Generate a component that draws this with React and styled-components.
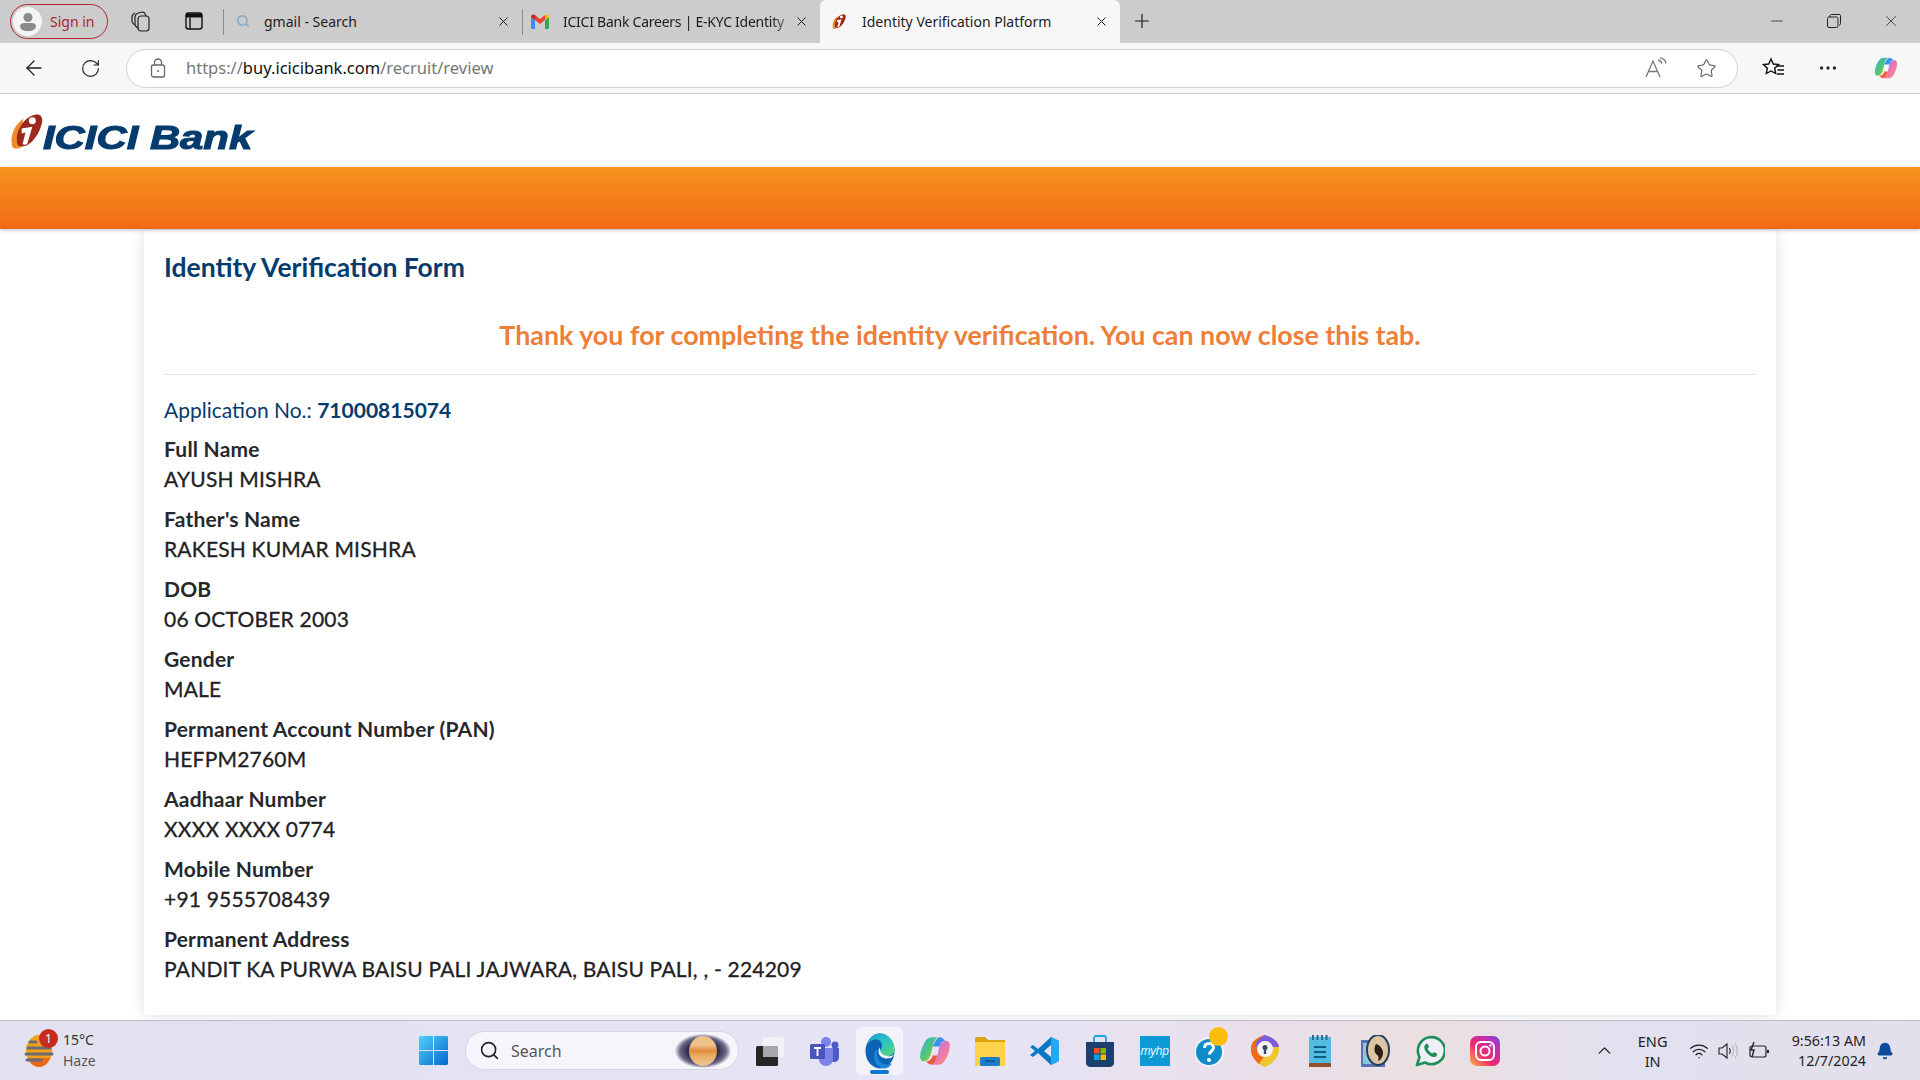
import React from "react";
import styled, { createGlobalStyle } from "styled-components";
import { X, Plus, ArrowLeft, RotateCw, Star, Search, Minus, ChevronUp, Wifi, MoreHorizontal, Bell } from "lucide-react";

const GlobalStyle = createGlobalStyle`
  html, body { margin: 0; padding: 0; background: #fff; }
  body { width: 1920px; height: 1080px; overflow: hidden; }
`;

const Screen = styled.div`
  width: 1920px;
  height: 1080px;
  display: flex;
  flex-direction: column;
  font-family: "Noto Sans", sans-serif;
  color: #1c1c1c;
`;

/* Browser tabs */
const TabStrip = styled.div`
  height: 43px;
  flex: none;
  background: #cccccc;
  display: flex;
  align-items: flex-start;
  box-sizing: border-box;
  padding-left: 10px;
`;

const SignIn = styled.div`
  width: 98px;
  height: 35px;
  margin-top: 4px;
  box-sizing: border-box;
  border: 1.5px solid #b3262e;
  border-radius: 18px;
  display: flex;
  align-items: center;
  gap: 8px;
  padding-left: 2px;
  font-size: 14px;
  color: #a8262c;
  flex: none;
`;

const AvatarDot = styled.div`
  width: 29px;
  height: 29px;
  border-radius: 50%;
  background: #f4f4f4;
  display: flex;
  align-items: center;
  justify-content: center;
`;

const StripIcon = styled.div`
  width: 24px;
  height: 42px;
  display: flex;
  align-items: center;
  justify-content: center;
  margin-left: ${(p) => p.$ml}px;
  flex: none;
  color: #1a1a1a;
`;

const TabSep = styled.div`
  width: 1px;
  height: 26px;
  margin: 9px 0 0 ${(p) => p.$ml || 0}px;
  background: #8c8c8c;
  flex: none;
`;

const Tab = styled.div`
  width: ${(p) => p.$w}px;
  height: ${(p) => (p.$active ? 43 : 42)}px;
  flex: none;
  box-sizing: border-box;
  display: flex;
  align-items: center;
  padding: 0 11px 0 ${(p) => p.$pl}px;
  font-size: 14px;
  background: ${(p) => (p.$active ? "#f7f7f7" : "transparent")};
  border-radius: ${(p) => (p.$active ? "6px 6px 0 0" : "0")};
`;

const TabIcon = styled.div`
  width: 18px;
  height: 18px;
  flex: none;
  display: flex;
  align-items: center;
  justify-content: center;
  margin-right: ${(p) => p.$mr}px;
`;

const TabTitle = styled.span`
  flex: 1;
  white-space: nowrap;
  ${(p) =>
    p.$fade &&
    `letter-spacing: -0.25px;
     -webkit-mask-image: linear-gradient(to right, #000 90%, rgba(0,0,0,0.25));
     mask-image: linear-gradient(to right, #000 90%, rgba(0,0,0,0.25));`}
`;

const WindowControls = styled.div`
  margin-left: auto;
  display: flex;
  align-items: center;
  height: 42px;
  gap: 41px;
  padding-right: 20px;
`;

/* Address bar row */
const Toolbar = styled.div`
  height: 51px;
  flex: none;
  box-sizing: border-box;
  background: #f7f7f7;
  border-bottom: 1px solid #c9c9c9;
  display: flex;
  align-items: center;
  padding-left: 22px;
`;

const ToolButton = styled.div`
  width: 24px;
  height: 24px;
  flex: none;
  display: flex;
  align-items: center;
  justify-content: center;
  margin-left: ${(p) => p.$ml || 0}px;
  color: #222;
`;

const AddressBar = styled.div`
  width: 1612px;
  height: 39px;
  margin-left: 24px;
  flex: none;
  box-sizing: border-box;
  background: #fff;
  border: 1px solid #d2d2d2;
  border-radius: 20px;
  display: flex;
  align-items: center;
  padding: 0 20px 0 23px;
  color: #666;
`;

const Url = styled.div`
  margin: -2px 0 0 20px;
  font-size: 16.5px;
  color: #777;
  flex: 1;
  b {
    font-weight: 400;
    color: #111;
  }
`;

/* Page */
const Page = styled.div`
  flex: 1;
  min-height: 0;
  display: flex;
  flex-direction: column;
  background: #fff;
`;

const LogoRow = styled.div`
  height: 73px;
  flex: none;
  box-sizing: border-box;
  padding: 20px 0 0 10px;
  display: flex;
  align-items: flex-start;
`;

const LogoText = styled.span`
  font-family: "Liberation Sans", sans-serif;
  font-weight: 700;
  font-style: italic;
  font-size: 34px;
  line-height: 40px;
  margin-top: 3px;
  color: #053c6d;
  -webkit-text-stroke: 1.1px #053c6d;
  white-space: nowrap;
  transform: scaleX(1.23);
  transform-origin: left center;
`;

const OrangeBar = styled.div`
  height: 62px;
  flex: none;
  background: linear-gradient(#f7941f, #f26a15);
  box-shadow: 0 1px 4px rgba(0, 0, 0, 0.25);
  position: relative;
  z-index: 1;
`;

const Card = styled.main`
  width: 1632px;
  margin: 1px auto 0;
  height: 785px;
  flex: none;
  box-sizing: border-box;
  padding: 18px 20px 0;
  background: #fff;
  box-shadow: 0 0 14px rgba(0, 0, 0, 0.14);
  border-radius: 0 0 4px 4px;
  font-family: Lato, sans-serif;
`;

const FormTitle = styled.h1`
  margin: 0;
  font-size: 26.5px;
  line-height: 38px;
  font-weight: 700;
  color: #053c6d;
`;

const ThankYou = styled.div`
  margin-top: 31px;
  height: 58px;
  box-sizing: border-box;
  line-height: 36px;
  text-align: center;
  font-size: 26.8px;
  font-weight: 700;
  color: #ee7f3a;
  border-bottom: 1px solid #e4e4e4;
`;

const AppNo = styled.div`
  margin-top: 22px;
  font-size: 21px;
  line-height: 26px;
  color: #053c6d;
  b {
    font-weight: 700;
  }
`;

const Fields = styled.dl`
  margin: 11px 0 0;
  display: flex;
  flex-direction: column;
  gap: 10px;
`;

const Field = styled.div`
  height: 60px;
`;

const FieldLabel = styled.dt`
  font-size: 21px;
  line-height: 30px;
  font-weight: 700;
  letter-spacing: 0.2px;
  color: #26282b;
`;

const FieldValue = styled.dd`
  margin: 0;
  font-size: 21px;
  line-height: 30px;
  letter-spacing: 0.2px;
  -webkit-text-stroke: 0.3px #1f2124;
  color: #1f2124;
`;

/* Windows taskbar */
const Taskbar = styled.footer`
  height: 60px;
  flex: none;
  box-sizing: border-box;
  border-top: 1px solid #bcbbca;
  background: linear-gradient(90deg, #e1e1ef 0%, #e6e4f6 50%, #e9dfe8 68%, #ecdfe0 74%, #e2e1ef 84%, #e3dfec 100%);
  display: flex;
  align-items: center;
  position: relative;
  margin-top: 5px;
`;

const Weather = styled.div`
  width: 114px;
  padding-left: 24px;
  display: flex;
  align-items: center;
  gap: 9px;
  flex: none;
  position: relative;
`;

const WeatherBadge = styled.span`
  position: absolute;
  left: 39px;
  top: -2px;
  width: 19px;
  height: 19px;
  border-radius: 50%;
  background: #c62b20;
  color: #fff;
  font-size: 12px;
  line-height: 19px;
  text-align: center;
`;

const WeatherText = styled.div`
  font-size: 14px;
  line-height: 21px;
  margin-top: -2px;
  color: #333;
  span {
    display: block;
    color: #555;
  }
`;

const Center = styled.div`
  margin-left: 281px;
  display: flex;
  align-items: center;
  flex: none;
`;

const TaskSearch = styled.div`
  width: 274px;
  height: 39px;
  margin-left: 17px;
  box-sizing: border-box;
  border-radius: 20px;
  background: #f6f5fc;
  border: 1px solid #d6d5e4;
  display: flex;
  align-items: center;
  padding: 0 7px 0 13px;
  gap: 11px;
  font-size: 16px;
  color: #555;
`;

const Planet = styled.div`
  margin-left: auto;
  width: 56px;
  height: 34px;
  border-radius: 50%;
  display: flex;
  align-items: center;
  justify-content: center;
  background: radial-gradient(ellipse at center, #2f2a4e 38%, #6b6885 58%, rgba(240, 240, 250, 0) 72%);
`;

const PlanetBall = styled.div`
  width: 28px;
  height: 30px;
  border-radius: 50%;
  background: linear-gradient(#eec28a 0 30%, #e48a3c 50%, #e9ab62 64%, #edc896);
`;

const Apps = styled.div`
  display: flex;
  align-items: center;
  margin-left: 3px;
`;

const AppSlot = styled.div`
  width: 55px;
  height: 56px;
  display: flex;
  align-items: center;
  justify-content: center;
  position: relative;
  flex: none;
`;

const ActiveBg = styled.div`
  width: 47px;
  height: 48px;
  border-radius: 5px;
  background: #f3f2fb;
  display: flex;
  align-items: center;
  justify-content: center;
  position: relative;
`;

const ActiveMark = styled.span`
  position: absolute;
  left: 14px;
  bottom: 1px;
  width: 19px;
  height: 4px;
  border-radius: 2px;
  background: #0b78d0;
`;

const HelpDot = styled.span`
  position: absolute;
  right: 9px;
  top: 4px;
  width: 19px;
  height: 19px;
  border-radius: 50%;
  background: #fbbc0a;
`;

const Tray = styled.div`
  margin-left: auto;
  display: flex;
  align-items: center;
  padding-right: 26px;
  color: #222;
`;

const Lang = styled.div`
  width: 40px;
  margin-left: 18px;
  font-size: 14.5px;
  line-height: 20px;
  text-align: center;
`;

const TrayIcons = styled.div`
  display: flex;
  align-items: center;
  gap: 9px;
  margin-left: 16px;
`;

const Clock = styled.div`
  margin-left: 22px;
  font-size: 14.3px;
  line-height: 20px;
  text-align: right;
  white-space: nowrap;
`;

const IciciMark = ({ size = 34 }) => (
  <svg width={size} height={size * 1.06} viewBox="0 0 34 36">
    <path d="M3 35C-1 26 3 12 14 5c-3 9-4 20-2 29-3 2-6 2-9 1z" fill="#f08a2a" />
    <path d="M8 32C4 22 12 4 25 1c7-2 9 3 8 8-2 9-8 19-15 23-4 2-8 2-10 0z" fill="#9b2a1c" />
    <circle cx="23" cy="7" r="3.6" fill="#fff" />
    <path d="M12 15l11-2-5 17c-1 2-4 2-5 1l3-12-4 1z" fill="#fff" />
  </svg>
);

const CopilotIcon = ({ size = 30 }) => (
  <svg width={size} height={size} viewBox="0 0 28 28">
    <defs>
      <linearGradient id={`cpa${size}`} x1="0" y1="0" x2="1" y2="1">
        <stop offset="0" stopColor="#2fb4f0" />
        <stop offset="0.55" stopColor="#56c76a" />
        <stop offset="1" stopColor="#f2c230" />
      </linearGradient>
      <linearGradient id={`cpb${size}`} x1="0" y1="0" x2="1" y2="1">
        <stop offset="0" stopColor="#9f72ec" />
        <stop offset="0.6" stopColor="#f07aa8" />
        <stop offset="1" stopColor="#f59a5a" />
      </linearGradient>
    </defs>
    <path d="M11 2h6c-3 1-4 4-5 8l-2 8c-1 3-3 5-6 5-2 0-3-2-3-4 0-3 1-7 3-11 2-4 4-6 7-6z" fill={`url(#cpa${size})`} />
    <path d="M17 26h-6c3-1 4-4 5-8l2-8c1-3 3-5 6-5 2 0 3 2 3 4 0 3-1 7-3 11-2 4-4 6-7 6z" fill={`url(#cpb${size})`} />
    <path d="M12 10c2-4 3-7 6-8 2 0 4 2 5 3-3 0-4 2-5 5z" fill="#3a8ff0" />
    <path d="M16 18c-1 4-2 7-5 8-2 0-4-2-5-3 3 0 5-1 6-5z" fill="#ef5a3c" />
  </svg>
);

const PersonIcon = () => (
  <svg width="20" height="20" viewBox="0 0 20 20" fill="#8a8a8a">
    <circle cx="10" cy="5.5" r="4.5" />
    <path d="M2 14c0-2 2-3 4-3h8c2 0 4 1 4 3 0 3-3 5-8 5s-8-2-8-5z" />
  </svg>
);

const CollectionsIcon = () => (
  <svg width="22" height="22" viewBox="0 0 22 22" fill="none" stroke="#222" strokeWidth="1.2">
    <rect x="8" y="6" width="11" height="15" rx="3" />
    <path d="M8 18c-2-1-3-2-3-4V7c0-2 1-3 3-4l5-1c1 0 2 1 3 4" />
    <path d="M4.5 15C3 14 2 13 2 11V7c0-2 1-3 3-4" />
  </svg>
);

const VerticalTabsIcon = () => (
  <svg width="20" height="20" viewBox="0 0 20 20" fill="none" stroke="#111" strokeWidth="1.4">
    <rect x="2" y="2" width="16" height="16" rx="2.5" />
    <path d="M2 4.500h16" strokeWidth="4" />
    <path d="M6 6.500V18" />
  </svg>
);

const GmailIcon = () => (
  <svg width="18" height="15" viewBox="0 0 18 15">
    <path d="M0 3v10.5c0 .8.6 1.5 1.3 1.5H4V6z" fill="#4285f4" />
    <path d="M14 6v9h2.700c.7 0 1.300-.7 1.300-1.500V3z" fill="#34a853" />
    <path d="M14 1v5l4-3c0-2-2-3-3.500-2z" fill="#fbbc04" />
    <path d="M4 6V1l5 4 5-4v5L9 10z" fill="#ea4335" />
    <path d="M0 3c0-2 2-3 3.500-2L4 1.400V6z" fill="#c5221f" />
  </svg>
);

const LockIcon = () => (
  <svg width="16" height="20" viewBox="0 0 16 20" fill="none" stroke="#666" strokeWidth="1.3">
    <rect x="1.500" y="7" width="13" height="12" rx="2" />
    <path d="M4.500 7V4.500a3.500 3.500 0 0 1 7 0V7" />
    <circle cx="8" cy="13" r="1" fill="#666" stroke="none" />
  </svg>
);

const ReadAloudIcon = () => (
  <svg width="24" height="22" viewBox="0 0 24 22" fill="none" stroke="#777" strokeWidth="1.3">
    <path d="M1 20L8 4l7 16M3.500 14.500h9" />
    <path d="M13 3c2 .3 3.500 1.500 4 3.500M15 0.800c3 .5 5.500 2.500 6 5.700" />
  </svg>
);

const FavoritesIcon = () => (
  <svg width="24" height="22" viewBox="0 0 24 22" fill="none" stroke="#111" strokeWidth="1.4">
    <path d="M9 2l2.300 5 5.200.6-3.800 3.600 1 5.300L9 14l-4.700 2.500 1-5.300L1.500 7.600 6.700 7z" />
    <path d="M15 9h7M15.500 13h6.500M15 17h7" />
  </svg>
);

const RestoreIcon = () => (
  <svg width="14" height="14" viewBox="0 0 14 14" fill="none" stroke="#222" strokeWidth="1">
    <rect x="0.500" y="3" width="10.500" height="10.500" rx="1.500" />
    <path d="M3 3V2c0-1 .6-1.500 1.500-1.500H12c1 0 1.500.5 1.500 1.500v7.500c0 1-.5 1.500-1.500 1.500" />
  </svg>
);

const WeatherIcon = () => (
  <svg width="30" height="34" viewBox="0 0 30 34">
    <ellipse cx="15" cy="17" rx="13" ry="16" fill="#f0a01c" />
    <path d="M4 24h22c-2 5-6 9-11 9S6 29 4 24z" fill="#e8671c" />
    <g stroke="#6b6b76" strokeWidth="3" strokeLinecap="round">
      <path d="M6 8h6M4 14h22M2 20h26M3 26h14" />
    </g>
  </svg>
);

const WindowsLogo = () => (
  <svg width="29" height="29" viewBox="0 0 29 29">
    <defs>
      <linearGradient id="wl" x1="0" y1="0" x2="1" y2="1">
        <stop offset="0" stopColor="#4fd0fb" />
        <stop offset="1" stopColor="#0569cf" />
      </linearGradient>
    </defs>
    <path d="M0 1.500C0 .7.700 0 1.500 0H14v14H0zM15 0h12.500c.8 0 1.500.7 1.500 1.500V14H15zM0 15h14v14H1.500C.7 29 0 28.300 0 27.500zM15 15h14v12.500c0 .8-.7 1.500-1.500 1.500H15z" fill="url(#wl)" />
  </svg>
);

const TaskViewIcon = () => (
  <svg width="30" height="30" viewBox="0 0 30 30">
    <rect x="1" y="10" width="22" height="20" rx="1.500" fill="#262626" />
    <rect x="8" y="1" width="21" height="20" rx="1.500" fill="#f4f4f6" opacity="0.85" />
    <rect x="8" y="10" width="15" height="11" fill="#a8a8ac" />
  </svg>
);

const TeamsIcon = () => (
  <svg width="30" height="30" viewBox="0 0 30 30">
    <circle cx="16" cy="6" r="5" fill="#7b83eb" />
    <circle cx="25" cy="9" r="3.500" fill="#5059c9" />
    <path d="M20 12h9v9c0 3-2 5-5 5-2 0-4-1-4-3z" fill="#5059c9" />
    <path d="M9 12h14v11c0 4-3 7-7 7s-7-3-7-7z" fill="#7b83eb" />
    <rect x="0" y="8" width="15" height="15" rx="1.500" fill="#4b53bc" />
    <path d="M4 12h7M7.500 12v8" stroke="#fff" strokeWidth="1.800" />
  </svg>
);

const EdgeIcon = () => (
  <svg width="30" height="36" viewBox="0 0 30 36">
    <defs>
      <linearGradient id="edgeA" x1="0" y1="0" x2="1" y2="1">
        <stop offset="0" stopColor="#1f9fe0" />
        <stop offset="0.6" stopColor="#30c8b8" />
        <stop offset="1" stopColor="#62dc6c" />
      </linearGradient>
    </defs>
    <ellipse cx="15" cy="18" rx="14.500" ry="17.500" fill="#0c62b4" />
    <path d="M1 14C3 6 8 .500 15 .500c8 0 14.500 7 14.500 16 0 4-3 6.500-7 6.500-4 0-7-2-7.500-4.500-.2-2 2-3 2-6 0-4-3-6-6.500-6S3 9 1 14z" fill="url(#edgeA)" />
    <path d="M29.500 21c-1.500 3-4 4.500-7 4.500-5 0-9-2.500-9-7 0-1.500.5-3 1.500-4-.5 5 2.500 7.500 7 8.500 3 .5 5.500 0 7.500-2z" fill="#f3f2fb" />
    <path d="M18 35.500c-5-1-9-6-9-12 0-3 1-5.500 3-7.500-1 6 1 13 7 15 3 1 6 .5 8-1-2 4-5 5.500-9 5.500z" fill="#1a86d8" />
  </svg>
);

const FolderIcon = () => (
  <svg width="30" height="30" viewBox="0 0 30 30">
    <path d="M0 3c0-1 .7-2 2-2h8l3 3h17v4H0z" fill="#dba40f" />
    <rect x="0" y="6" width="30" height="24" fill="#fcd34a" />
    <rect x="5" y="21" width="20" height="9" rx="1.500" fill="#1e7fc9" />
    <path d="M10 25h10" stroke="#0c4f8a" strokeWidth="1.500" />
  </svg>
);

const VsCodeIcon = () => (
  <svg width="30" height="30" viewBox="0 0 30 30">
    <path d="M21 1l8 4v20l-8 4L8 17l-5 4-3-2 5-4-5-4 3-2 5 4z" fill="#0a78c8" />
    <path d="M21 1l8 4v20l-8 4z" fill="#23a8f2" />
    <path d="M21 9l-7 6 7 6z" fill="#e7e5f5" />
  </svg>
);

const StoreIcon = () => (
  <svg width="30" height="32" viewBox="0 0 30 32">
    <path d="M9 7V3c0-1 1-2 2-2h8c1 0 2 1 2 2v4" fill="none" stroke="#1aa3e6" strokeWidth="1.800" />
    <path d="M1 7h28v21c0 2-2 4-4 4H5c-2 0-4-2-4-4z" fill="#1d3f6e" />
    <rect x="9" y="13" width="5.500" height="5.500" fill="#f25022" />
    <rect x="15.500" y="13" width="5.500" height="5.500" fill="#7fba00" />
    <rect x="9" y="19.500" width="5.500" height="5.500" fill="#00a4ef" />
    <rect x="15.500" y="19.500" width="5.500" height="5.500" fill="#ffb900" />
  </svg>
);

const MyHpTile = styled.div`
  width: 30px;
  height: 30px;
  background: #0c9ad6;
  color: #e9f6fc;
  font-family: "Liberation Sans", sans-serif;
  font-size: 12px;
  font-style: italic;
  line-height: 30px;
  text-align: center;
  letter-spacing: -0.3px;
`;

const HelpIcon = () => (
  <svg width="30" height="32" viewBox="0 0 30 32">
    <circle cx="14" cy="17" r="14" fill="#0c8cc8" stroke="#f2f2f8" strokeWidth="2" />
    <path d="M9.500 13c0-3 2-4.500 4.500-4.500s4.500 1.500 4.500 4c0 3.500-4 3.500-4 7" fill="none" stroke="#fff" strokeWidth="3" />
    <circle cx="14" cy="25" r="2" fill="#fff" />
  </svg>
);

const GuardIcon = () => (
  <svg width="28" height="32" viewBox="0 0 28 32">
    <path d="M14 0c6 2 13 5 14 12 1 9-6 17-14 20C6 29-1 21 0 12 1 5 8 2 14 0z" fill="#f0c62e" />
    <path d="M14 0C8 2 1 5 0 12c-1 7 3 13 8 17l6-9z" fill="#ee6c1a" />
    <path d="M14 0c6 2 13 5 14 12H20a6 6 0 0 0-12 0H4C5 6 9 2 14 0z" fill="#7e5be0" />
    <circle cx="14" cy="14" r="8" fill="#f5f5fa" />
    <circle cx="14" cy="12.500" r="2.500" fill="#394a5c" />
    <rect x="12.800" y="13" width="2.400" height="6" fill="#394a5c" />
  </svg>
);

const NotepadIcon = () => (
  <svg width="24" height="32" viewBox="0 0 24 32">
    <rect x="1" y="2" width="22" height="27" rx="1" fill="#52bde0" />
    <path d="M1 28h22v4H1z" fill="#93522a" />
    <path d="M6 12h12M6 17h12M6 22h12" stroke="#0f5a82" strokeWidth="2" />
    <path d="M5 0v5M9.500 0v5M14 0v5M18.500 0v5" stroke="#2a6c8c" strokeWidth="2" />
  </svg>
);

const ViewerIcon = () => (
  <svg width="30" height="32" viewBox="0 0 30 32">
    <rect x="1" y="5" width="24" height="27" fill="#5a72b8" />
    <rect x="3" y="8" width="20" height="21" fill="#8fc7d8" />
    <ellipse cx="18" cy="15" rx="11" ry="15" fill="#dfc4a4" stroke="#22405e" strokeWidth="2" />
    <path d="M16 9c4 1 7 5 7 9s-3 8-5 8c1-3 1-5-2-7-2-2-2-7 0-10z" fill="#2b1c14" />
  </svg>
);

const WhatsAppIcon = () => (
  <svg width="30" height="32" viewBox="0 0 30 32" fill="none">
    <path d="M2 30l2.500-8A13.500 13.500 0 1 1 10 27.500z" stroke="#1f8f5a" strokeWidth="2.600" strokeLinejoin="round" fill="#f1eff6" />
    <path d="M10.500 9.500c-2 2-1.500 5 1.500 8.500s6.500 5 9 3.500c1-.7 1.500-2 1-2.700l-3-1.800-1.500 1.500c-2-.5-4.500-3-5-5l1.500-1.500-1.300-3c-.7-.5-1.700-.3-2.200.5z" fill="#1f8f5a" />
  </svg>
);

const InstagramIcon = () => (
  <svg width="30" height="30" viewBox="0 0 30 30">
    <defs>
      <linearGradient id="ig" x1="0" y1="1" x2="1" y2="0">
        <stop offset="0" stopColor="#fdb44a" />
        <stop offset="0.4" stopColor="#ee2a6b" />
        <stop offset="0.8" stopColor="#b82fc0" />
        <stop offset="1" stopColor="#5a55d6" />
      </linearGradient>
    </defs>
    <rect width="30" height="30" rx="7" fill="url(#ig)" />
    <rect x="6" y="6" width="18" height="18" rx="5" fill="none" stroke="#fff" strokeWidth="2" />
    <circle cx="15" cy="15" r="4.500" fill="none" stroke="#fff" strokeWidth="2" />
    <circle cx="20.500" cy="9.500" r="1.200" fill="#fff" />
  </svg>
);

const SpeakerIcon = () => (
  <svg width="21" height="18" viewBox="0 0 21 18" fill="none" stroke="#222" strokeWidth="1.100">
    <path d="M1 6h3l5-4v14l-5-4H1z" />
    <path d="M11.500 6c1 2 1 4 0 6" />
    <path d="M14 3.500c2 3 2 8 0 11M17 1.500c3 4 3 11 0 15" stroke="#b5b5bd" />
  </svg>
);

const BatteryIcon = () => (
  <svg width="22" height="18" viewBox="0 0 22 18" fill="none" stroke="#222" strokeWidth="1.200">
    <rect x="2" y="4" width="16" height="11" rx="2" />
    <path d="M20 8v3" strokeWidth="2" />
    <path d="M6 0L3 8h3l-2 7" strokeWidth="1.400" />
  </svg>
);

const fields = [
  ["Full Name", "AYUSH MISHRA"],
  ["Father's Name", "RAKESH KUMAR MISHRA"],
  ["DOB", "06 OCTOBER 2003"],
  ["Gender", "MALE"],
  ["Permanent Account Number (PAN)", "HEFPM2760M"],
  ["Aadhaar Number", "XXXX XXXX 0774"],
  ["Mobile Number", "+91 9555708439"],
  ["Permanent Address", "PANDIT KA PURWA BAISU PALI JAJWARA, BAISU PALI, , - 224209"],
];

export default function App() {
  return (
    <Screen>
      <GlobalStyle />
      <TabStrip>
        <SignIn>
          <AvatarDot>
            <PersonIcon />
          </AvatarDot>
          Sign in
        </SignIn>
        <StripIcon $ml={21}>
          <CollectionsIcon />
        </StripIcon>
        <StripIcon $ml={29}>
          <VerticalTabsIcon />
        </StripIcon>
        <TabSep $ml={17} />
        <Tab $w={298} $pl={10}>
          <TabIcon $mr={12}>
            <Search size={14} color="#7fa8cc" strokeWidth={2.4} />
          </TabIcon>
          <TabTitle>gmail - Search</TabTitle>
          <X size={15} strokeWidth={1.6} />
        </Tab>
        <TabSep />
        <Tab $w={297} $pl={8}>
          <TabIcon $mr={14}>
            <GmailIcon />
          </TabIcon>
          <TabTitle $fade>ICICI Bank Careers | E-KYC Identity</TabTitle>
          <X size={15} strokeWidth={1.6} />
        </Tab>
        <Tab $w={300} $active $pl={10}>
          <TabIcon $mr={14}>
            <IciciMark size={14} />
          </TabIcon>
          <TabTitle>Identity Verification Platform</TabTitle>
          <X size={15} strokeWidth={1.6} />
        </Tab>
        <StripIcon $ml={10}>
          <Plus size={22} strokeWidth={1.3} />
        </StripIcon>
        <WindowControls>
          <Minus size={18} strokeWidth={1} />
          <RestoreIcon />
          <X size={18} strokeWidth={1} />
        </WindowControls>
      </TabStrip>

      <Toolbar>
        <ToolButton>
          <ArrowLeft size={24} strokeWidth={1.3} />
        </ToolButton>
        <ToolButton $ml={32}>
          <RotateCw size={21} strokeWidth={1.3} />
        </ToolButton>
        <AddressBar>
          <LockIcon />
          <Url>
            https://<b>buy.icicibank.com</b>/recruit/review
          </Url>
          <ReadAloudIcon />
          <Star size={21} strokeWidth={1.3} style={{ marginLeft: 27 }} />
        </AddressBar>
        <ToolButton $ml={24}>
          <FavoritesIcon />
        </ToolButton>
        <ToolButton $ml={30}>
          <MoreHorizontal size={22} strokeWidth={1.6} />
        </ToolButton>
        <ToolButton $ml={34}>
          <CopilotIcon />
        </ToolButton>
      </Toolbar>

      <Page>
        <LogoRow>
          <IciciMark size={33} />
          <LogoText>ICICI Bank</LogoText>
        </LogoRow>
        <OrangeBar />
        <Card>
          <FormTitle>Identity Verification Form</FormTitle>
          <ThankYou>Thank you for completing the identity verification. You can now close this tab.</ThankYou>
          <AppNo>
            Application No.: <b>71000815074</b>
          </AppNo>
          <Fields>
            {fields.map(([label, value]) => (
              <Field key={label}>
                <FieldLabel>{label}</FieldLabel>
                <FieldValue>{value}</FieldValue>
              </Field>
            ))}
          </Fields>
        </Card>
      </Page>

      <Taskbar>
        <Weather>
          <WeatherIcon />
          <WeatherBadge>1</WeatherBadge>
          <WeatherText>
            15°C
            <span>Haze</span>
          </WeatherText>
        </Weather>
        <Center>
          <WindowsLogo />
          <TaskSearch>
            <Search size={21} strokeWidth={1.8} color="#222" />
            Search
            <Planet>
              <PlanetBall />
            </Planet>
          </TaskSearch>
          <Apps>
            <AppSlot>
              <TaskViewIcon />
            </AppSlot>
            <AppSlot>
              <TeamsIcon />
            </AppSlot>
            <AppSlot>
              <ActiveBg>
                <EdgeIcon />
                <ActiveMark />
              </ActiveBg>
            </AppSlot>
            <AppSlot>
              <CopilotIcon size={32} />
            </AppSlot>
            <AppSlot>
              <FolderIcon />
            </AppSlot>
            <AppSlot>
              <VsCodeIcon />
            </AppSlot>
            <AppSlot>
              <StoreIcon />
            </AppSlot>
            <AppSlot>
              <MyHpTile>myhp</MyHpTile>
            </AppSlot>
            <AppSlot>
              <HelpIcon />
              <HelpDot />
            </AppSlot>
            <AppSlot>
              <GuardIcon />
            </AppSlot>
            <AppSlot>
              <NotepadIcon />
            </AppSlot>
            <AppSlot>
              <ViewerIcon />
            </AppSlot>
            <AppSlot>
              <WhatsAppIcon />
            </AppSlot>
            <AppSlot>
              <InstagramIcon />
            </AppSlot>
          </Apps>
        </Center>
        <Tray>
          <ChevronUp size={21} strokeWidth={1.6} />
          <Lang>
            ENG
            <br />
            IN
          </Lang>
          <TrayIcons>
            <Wifi size={20} strokeWidth={1.6} />
            <SpeakerIcon />
            <BatteryIcon />
          </TrayIcons>
          <Clock>
            9:56:13 AM
            <br />
            12/7/2024
          </Clock>
          <Bell size={18} fill="#0f4c9c" color="#0f4c9c" style={{ marginLeft: 10 }} />
        </Tray>
      </Taskbar>
    </Screen>
  );
}
